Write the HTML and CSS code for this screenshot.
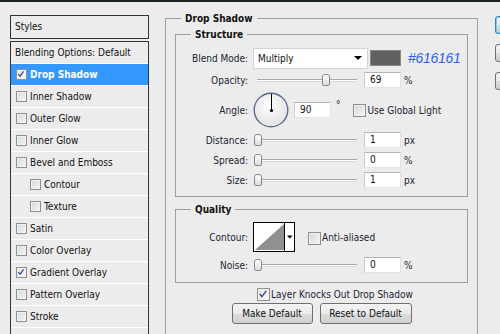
FILE: index.html
```html
<!DOCTYPE html>
<html>
<head>
<meta charset="utf-8">
<title>Layer Style</title>
<link rel="stylesheet" href="styles.css">
</head>
<body>
<div class="window">
  <aside class="styles-col">
    <div class="styles-head">Styles</div>
    <ul class="styles-list">
      <li class="item plain">Blending Options: Default</li>
      <li class="item selected"><span class="cb small on"><svg viewBox="0 0 11 11" width="9" height="9"><path d="M1.5 5 L3.8 7.6 L8 1.8" fill="none" stroke="#3b4f8e" stroke-width="1.6"/></svg></span><b>Drop Shadow</b></li>
      <li class="item"><span class="cb small"></span>Inner Shadow</li>
      <li class="item"><span class="cb small"></span>Outer Glow</li>
      <li class="item"><span class="cb small"></span>Inner Glow</li>
      <li class="item"><span class="cb small"></span>Bevel and Emboss</li>
      <li class="item sub"><span class="cb small"></span>Contour</li>
      <li class="item sub"><span class="cb small"></span>Texture</li>
      <li class="item"><span class="cb small"></span>Satin</li>
      <li class="item"><span class="cb small"></span>Color Overlay</li>
      <li class="item"><span class="cb small on"><svg viewBox="0 0 11 11" width="9" height="9"><path d="M1.5 5 L3.8 7.6 L8 1.8" fill="none" stroke="#3b4f8e" stroke-width="1.6"/></svg></span>Gradient Overlay</li>
      <li class="item"><span class="cb small"></span>Pattern Overlay</li>
      <li class="item"><span class="cb small"></span>Stroke</li>
    </ul>
  </aside>

  <main class="settings">
    <fieldset class="group outer">
      <legend>Drop Shadow</legend>

      <fieldset class="group inner structure">
        <legend>Structure</legend>

        <div class="row row-blend">
          <span class="lbl">Blend Mode:</span>
          <div class="select"><span>Multiply</span><span class="arrow"></span></div>
          <span class="swatch"></span>
          <span class="note">#616161</span>
        </div>

        <div class="row row-slider first">
          <span class="lbl">Opacity:</span>
          <div class="slider"><span class="track"></span><span class="thumb" style="left:68px"></span></div>
          <span class="num">69</span><span class="unit">%</span>
        </div>

        <div class="row row-angle">
          <span class="lbl">Angle:</span>
          <svg class="dial" width="36" height="36" viewBox="0 0 36 36">
            <defs>
              <radialGradient id="dialFill" cx="45%" cy="40%" r="65%">
                <stop offset="0" stop-color="#ffffff"/>
                <stop offset="1" stop-color="#e0e0e0"/>
              </radialGradient>
            </defs>
            <circle cx="18" cy="18" r="16.8" fill="url(#dialFill)" stroke="#5a6c8e" stroke-width="1.4"/>
            <line x1="18.5" y1="18" x2="18.5" y2="2" stroke="#000" stroke-width="1"/>
            <circle cx="18.5" cy="18.5" r="1.6" fill="#000"/>
          </svg>
          <span class="num angle-num">90</span>
          <span class="deg">°</span>
          <span class="cb global"></span>
          <span class="cb-text">Use Global Light</span>
        </div>

        <div class="row row-slider">
          <span class="lbl">Distance:</span>
          <div class="slider"><span class="track"></span><span class="thumb" style="left:0px"></span></div>
          <span class="num">1</span><span class="unit">px</span>
        </div>

        <div class="row row-slider">
          <span class="lbl">Spread:</span>
          <div class="slider"><span class="track"></span><span class="thumb" style="left:0px"></span></div>
          <span class="num">0</span><span class="unit">%</span>
        </div>

        <div class="row row-slider">
          <span class="lbl">Size:</span>
          <div class="slider"><span class="track"></span><span class="thumb" style="left:0px"></span></div>
          <span class="num">1</span><span class="unit">px</span>
        </div>
      </fieldset>

      <fieldset class="group inner quality">
        <legend>Quality</legend>

        <div class="row row-contour">
          <span class="lbl">Contour:</span>
          <svg class="contour" width="42" height="30" viewBox="0 0 42 30">
            <rect x="0.5" y="0.5" width="41" height="29" fill="#fff" stroke="#000"/>
            <polygon points="2,28 31,2 31,28" fill="#909090"/>
            <line x1="31.5" y1="0" x2="31.5" y2="30" stroke="#000"/>
            <polygon points="34,13.5 39.5,13.5 36.75,16.5" fill="#000"/>
          </svg>
          <span class="cb anti"></span>
          <span class="cb-text">Anti-aliased</span>
        </div>

        <div class="row row-slider noise">
          <span class="lbl">Noise:</span>
          <div class="slider"><span class="track"></span><span class="thumb" style="left:0px"></span></div>
          <span class="num">0</span><span class="unit">%</span>
        </div>
      </fieldset>

      <div class="knock">
        <span class="cb on"><svg viewBox="0 0 13 13" width="11" height="11"><path d="M2 6 L4.6 9 L9.8 2.2" fill="none" stroke="#3b4f8e" stroke-width="1.8"/></svg></span>
        <span class="cb-text">Layer Knocks Out Drop Shadow</span>
      </div>

      <div class="buttons">
        <button class="btn make">Make Default</button>
        <button class="btn reset">Reset to Default</button>
      </div>
    </fieldset>
  </main>

  <div class="actions">
    <button class="side-btn default" aria-label="OK"></button>
    <button class="side-btn" aria-label="Cancel"></button>
    <button class="side-btn" aria-label="New Style"></button>
  </div>
</div>
</body>
</html>
```

FILE: styles.css
```css
* { box-sizing: border-box; }

html, body {
  margin: 0;
  padding: 0;
}

body {
  width: 500px;
  height: 334px;
  overflow: hidden;
  background: #ececec;
  font-family: "DejaVu Sans Condensed", "DejaVu Sans", sans-serif;
  font-stretch: condensed;
  font-size: 10px;
  color: #111;
}

.window {
  display: flex;
  width: 500px;
  height: 334px;
  overflow: hidden;
  border-top: 2px solid #1e2529;
}

/* ---------- left: styles list ---------- */
.styles-col {
  flex: none;
  width: 139px;
  margin-left: 10px;
  padding-top: 13px;
  display: flex;
  flex-direction: column;
}

.styles-head {
  height: 24px;
  border: 1px solid #333;
  padding-left: 4px;
  line-height: 22px;
  margin-bottom: 2px;
}

.styles-list {
  list-style: none;
  margin: 0;
  padding: 0;
  flex: 1;
  border: 1px solid #333;
  border-bottom: none;
}

.item {
  height: 22px;
  border-bottom: 1px solid #fff;
  display: flex;
  align-items: center;
  gap: 3px;
  padding-left: 5px;
  white-space: nowrap;
}

.item.plain { padding-left: 4px; }
.item.sub { padding-left: 19px; }

.item.selected {
  background: #3399ff;
  color: #fff;
}

.item b { font-weight: bold; }

/* ---------- checkboxes ---------- */
.cb {
  flex: none;
  width: 13px;
  height: 13px;
  border: 1px solid #8e8f8f;
  background: linear-gradient(135deg, #d6d6d6, #f7f7f7);
  box-shadow: inset 0 0 0 1px #f1f1f1;
  display: inline-flex;
  align-items: center;
  justify-content: center;
}

.cb.small {
  width: 11px;
  height: 11px;
}

.cb.on { background: linear-gradient(135deg, #e2e2e2, #fafafa); }

.cb-text {
  white-space: nowrap;
  color: #1b2433;
}

/* ---------- right: settings ---------- */
.settings {
  flex: none;
  width: 313px;
  margin-left: 16px;
  padding-top: 10px;
  display: flex;
  flex-direction: column;
}

fieldset {
  margin: 0;
  min-width: 0;
}

.group {
  border: 1px solid #9e9e9e;
}

.group legend {
  font-weight: bold;
  line-height: 13px;
  height: 13px;
  padding: 0 4px;
  color: #111;
}

.outer {
  flex: 1;
  border-bottom: none;
  padding: 3px 9px 0 9px;
}

.outer > legend { margin-left: 6px; }

.inner > legend { margin-left: 15px; }

.structure { padding: 6px 0 8px 0; }

.quality {
  margin-top: 6px;
  padding: 6px 0 9px 0;
}

.row {
  display: flex;
  align-items: center;
}

.lbl {
  flex: none;
  width: 72px;
  margin-right: 5px;
  text-align: right;
  white-space: nowrap;
  color: #1b2433;
}

/* blend mode */
.row-blend { height: 22px; }

.select {
  flex: none;
  width: 115px;
  height: 21px;
  background: #fff;
  border: 1px solid #d4d4d4;
  display: flex;
  align-items: center;
  justify-content: space-between;
  padding: 0 5px 0 4px;
}

.arrow {
  width: 0;
  height: 0;
  border-left: 4px solid transparent;
  border-right: 4px solid transparent;
  border-top: 4px solid #000;
}

.swatch {
  flex: none;
  width: 31px;
  height: 16px;
  margin-left: 2px;
  background: #616161;
  border: 1px solid #8a8a8a;
}

.note {
  margin-left: 7px;
  font-family: "Liberation Sans", sans-serif;
  font-stretch: normal;
  font-style: italic;
  font-size: 14px;
  letter-spacing: -0.3px;
  color: #2c62f2;
}

/* sliders */
.row-slider {
  height: 16px;
  margin-top: 4px;
}

.row-slider.first { margin-top: 3px; }
.row-slider.noise { margin-top: 5px; }

.slider {
  flex: none;
  position: relative;
  width: 106px;
  height: 16px;
  margin-left: 1px;
  margin-right: 4px;
  display: flex;
  align-items: center;
}

.track {
  display: block;
  width: 100%;
  height: 3px;
  margin: 0 3px;
  border-top: 1px solid #a7a7a7;
  border-bottom: 1px solid #dadada;
  background: #fff;
}

.thumb {
  position: absolute;
  top: 2px;
  width: 8px;
  height: 12px;
  border: 1px solid #8a8a8a;
  border-radius: 3px 3px 2px 2px;
  background: linear-gradient(#ffffff, #dcdcdc);
}

.num {
  flex: none;
  width: 37px;
  height: 16px;
  background: #fff;
  border: 1px solid #e2e3e5;
  border-top-color: #b3b5b9;
  border-left-color: #c9cbce;
  padding-left: 5px;
  line-height: 14px;
  color: #111;
}

.unit {
  margin-left: 3px;
  color: #1b2433;
}

/* angle */
.row-angle {
  height: 36px;
  margin-top: 4px;
}

.dial { flex: none; }

.angle-num { margin-left: 5px; }

.deg {
  margin-left: 5px;
  align-self: flex-start;
  margin-top: 8px;
  line-height: 10px;
}

.cb.global { margin-left: 12px; }
.global + .cb-text { margin-left: 2px; }

/* contour */
.row-contour { height: 30px; }

.contour { flex: none; }

.cb.anti {
  margin-left: 13px;
  margin-top: 2px;
}

.anti + .cb-text { margin-left: 1px; }

/* knock-out + buttons */
.knock {
  display: flex;
  align-items: center;
  gap: 1px;
  height: 13px;
  margin-top: 5px;
  padding-left: 82px;
}

.buttons {
  display: flex;
  justify-content: center;
  gap: 7px;
  margin-top: 2px;
}

.btn {
  height: 21px;
  padding: 0;
  font: inherit;
  color: #111;
  border: 1px solid #707070;
  border-radius: 3px;
  background: linear-gradient(#f4f4f4 0%, #ebebeb 50%, #dcdcdc 51%, #d0d0d0 100%);
}

.btn.make { width: 81px; }
.btn.reset { width: 92px; }

/* right edge buttons (cut off by the window edge) */
.actions {
  flex: none;
  margin-left: 17px;
  padding-top: 14px;
  display: flex;
  flex-direction: column;
  gap: 10px;
}

.side-btn {
  width: 80px;
  height: 18px;
  padding: 0;
  border: 1px solid #707070;
  border-radius: 3px;
  background: linear-gradient(#f2f2f2 0%, #ebebeb 50%, #dddddd 51%, #cfcfcf 100%);
}

.side-btn.default {
  border-color: #3c7fb1;
  box-shadow: inset 0 0 0 1px #6fd0f5;
}
```
